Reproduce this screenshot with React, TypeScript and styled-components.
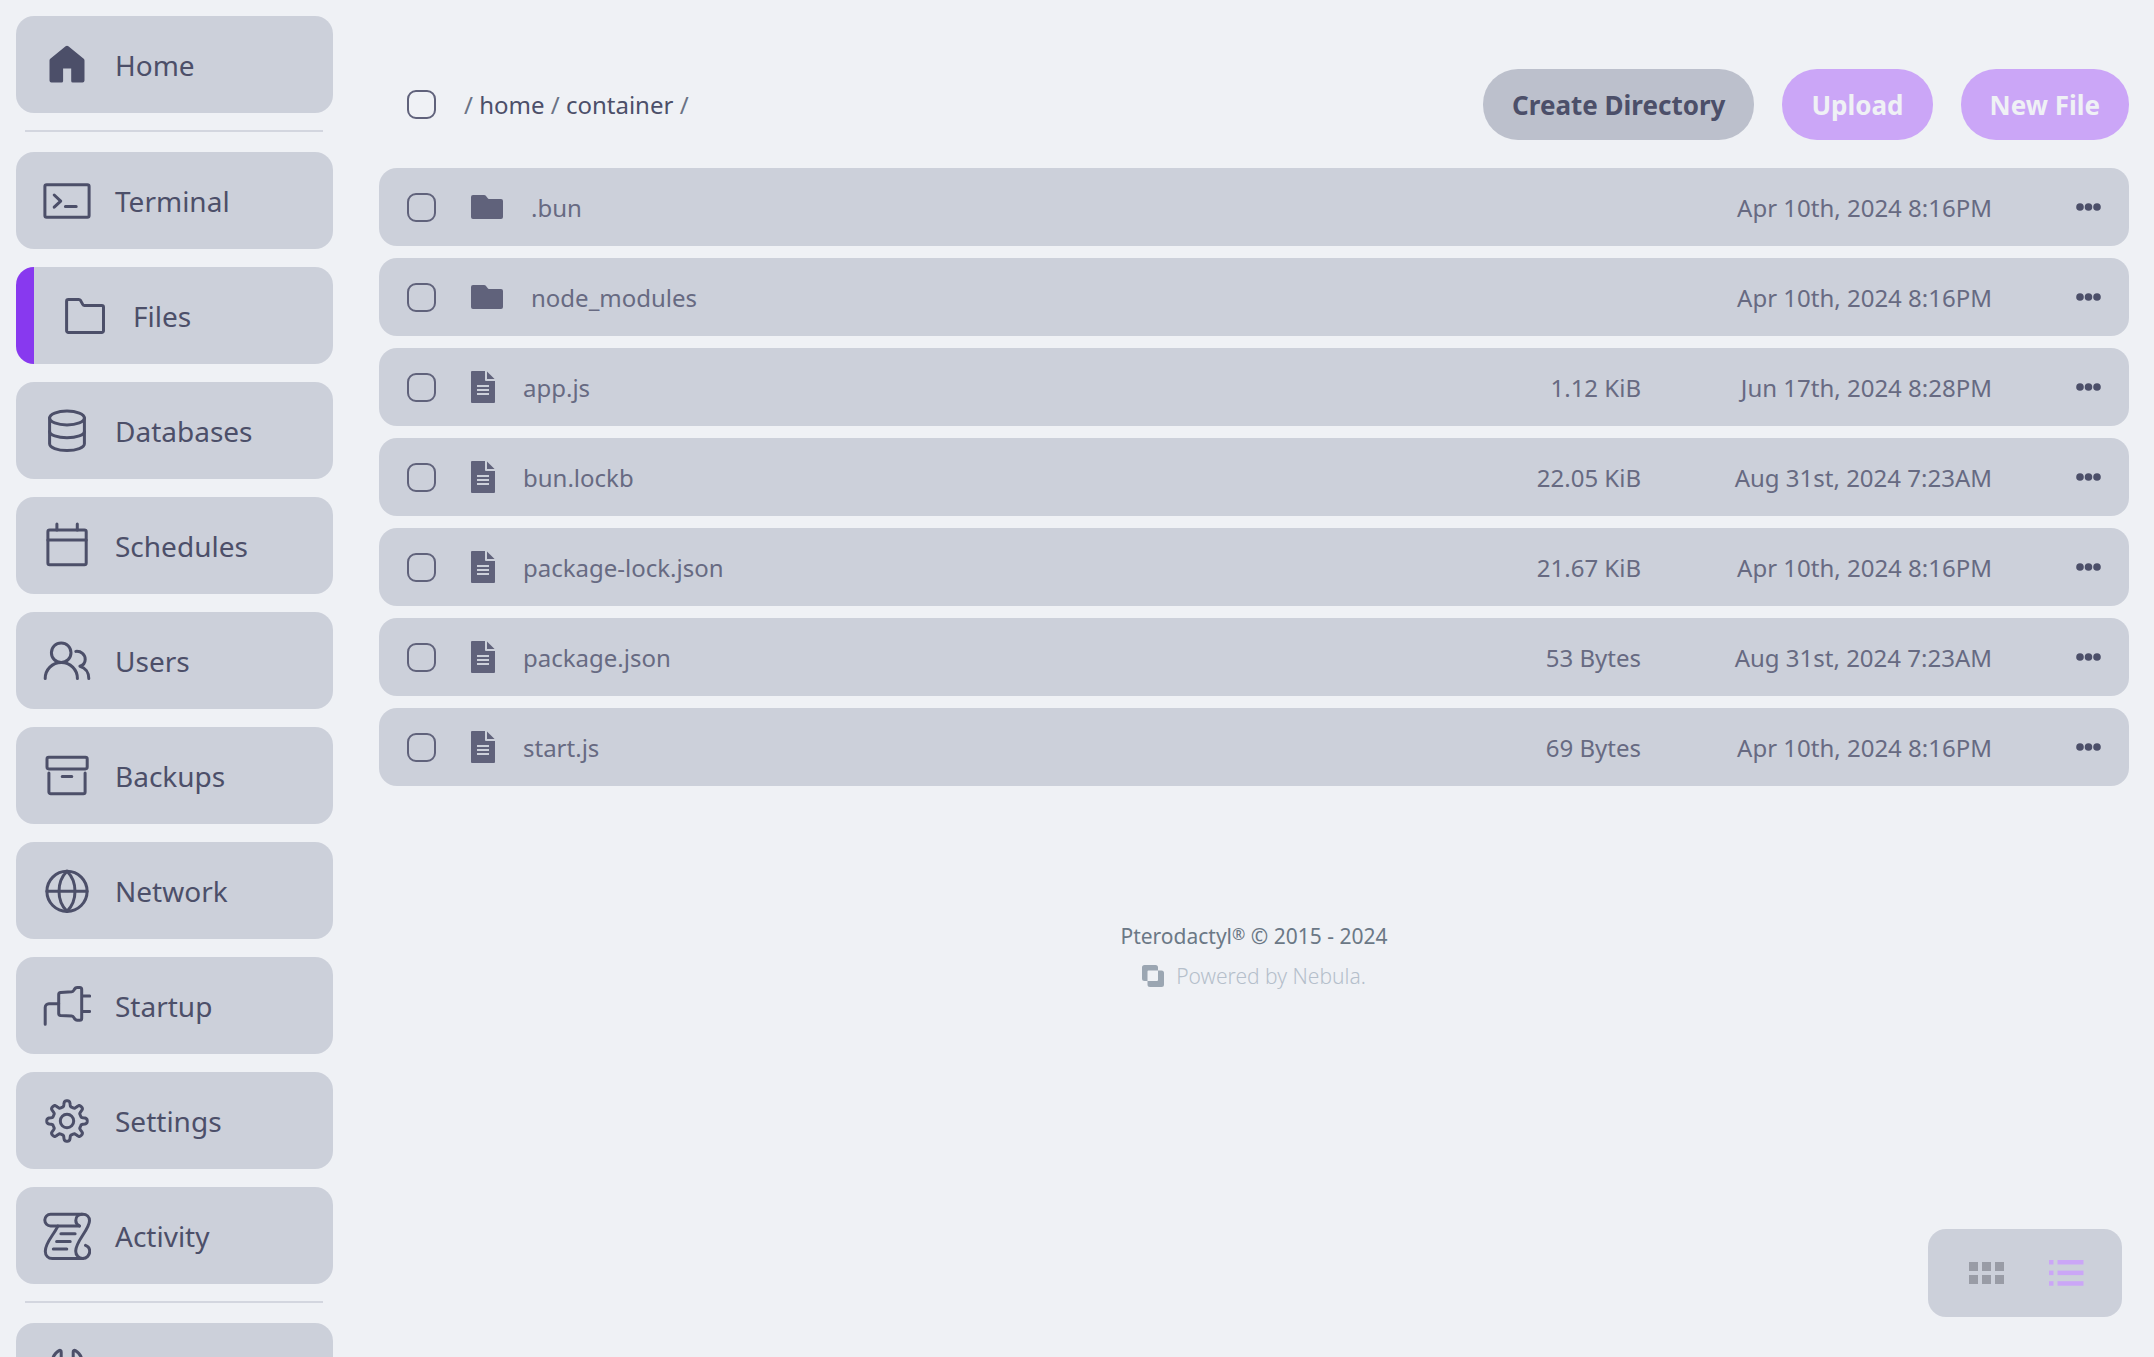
import React from 'react';
import styled, { createGlobalStyle, css } from 'styled-components';

const color = {
  base: '#eff1f5',
  surface: '#ccd0da',
  surfaceStrong: '#bcc0cc',
  text: '#4c4f69',
  subtext: '#676a82',
  icon: '#60627b',
  mauve: '#cba6f7',
  accent: '#8839ef',
  footer: '#6b7886',
  footerFaint: '#b5bfcb',
  footerLogo: '#9ba6b2',
  muted: '#999ca6',
};

const GlobalStyle = createGlobalStyle`
  *, *::before, *::after { box-sizing: border-box; }
  body {
    margin: 0;
    background: ${color.base};
    color: ${color.text};
    font-family: 'Noto Sans', 'Open Sans', sans-serif;
    font-size: 24px;
  }
  button { font: inherit; border: 0; cursor: pointer; }
  svg { display: block; }
`;

const Shell = styled.div`
  display: flex;
  height: 100vh;
  overflow: hidden;
`;

const Sidebar = styled.nav`
  flex: 0 0 333px;
  padding: 16px 0 0 16px;
  overflow: hidden;
`;

const NavGroup = styled.ul`
  display: grid;
  gap: 18px;
  margin: 0;
  padding: 0;
  list-style: none;
`;

const NavDivider = styled.hr`
  height: 2px;
  margin: 17px 10px 20px 9px;
  border: 0;
  background: #d3d6df;
`;

const NavLink = styled.a<{ $active?: boolean }>`
  display: flex;
  align-items: center;
  gap: 24px;
  height: 97px;
  padding-left: 27px;
  border-radius: 18px;
  background: ${color.surface};
  color: ${color.text};
  font-size: 28px;
  text-decoration: none;
  ${({ $active }) =>
    $active &&
    css`
      border-left: 18px solid ${color.accent};
    `}
`;

const NavIcon = styled.svg`
  flex: none;
  width: 48px;
  height: 48px;
  fill: none;
  stroke: currentColor;
  stroke-width: 3;
  stroke-linecap: round;
  stroke-linejoin: round;
`;

const Main = styled.main`
  flex: 1;
  min-width: 0;
  padding: 69px 25px 40px 46px;
`;

const Toolbar = styled.header`
  display: flex;
  align-items: center;
  gap: 28px;
  height: 71px;
  margin-bottom: 16px;
  padding-left: 28px;
`;

const Checkbox = styled.input.attrs({ type: 'checkbox' })`
  appearance: none;
  display: block;
  flex: none;
  width: 29px;
  height: 29px;
  margin: 0;
  border: 2px solid ${color.icon};
  border-radius: 9px;
  &:checked { background: ${color.mauve}; }
`;

const Breadcrumbs = styled.nav`
  flex: 1;
  color: #6b7385;
  a { color: ${color.text}; text-decoration: none; }
`;

const Actions = styled.div`
  display: flex;
  gap: 28px;
`;

const ActionButton = styled.button<{ $primary?: boolean }>`
  height: 71px;
  padding: 0 29px;
  border-radius: 35px;
  background: ${({ $primary }) => ($primary ? color.mauve : color.surfaceStrong)};
  color: ${({ $primary }) => ($primary ? color.base : color.text)};
  font-size: 26px;
  font-weight: 700;
  white-space: nowrap;
`;

const FileTable = styled.table`
  width: 100%;
  table-layout: fixed;
  border-collapse: separate;
  border-spacing: 0 12px;
  color: ${color.subtext};
`;

const Column = styled.col<{ $width?: number }>`
  width: ${({ $width }) => ($width ? `${$width}px` : 'auto')};
`;

const Cell = styled.td<{ $align?: 'right' }>`
  height: 78px;
  padding: 0;
  background: ${color.surface};
  text-align: ${({ $align }) => $align ?? 'left'};
  white-space: nowrap;
  &:first-child { padding-left: 28px; border-radius: 18px 0 0 18px; }
  &:last-child { padding-right: 28px; border-radius: 0 18px 18px 0; }
`;

const FileName = styled.a`
  display: flex;
  align-items: center;
  gap: 28px;
  color: inherit;
  text-decoration: none;
  svg { flex: none; fill: ${color.icon}; }
`;

const MenuButton = styled.button`
  display: block;
  margin-left: auto;
  padding: 8px 0;
  background: none;
  color: ${color.text};
`;

const Footer = styled.footer`
  display: grid;
  justify-items: center;
  gap: 8px;
  margin-top: 122px;
  font-size: 21px;
  line-height: 32px;
`;

const Copyright = styled.p`
  margin: 0;
  color: ${color.footer};
`;

const Registered = styled.span`
  font-size: 16px;
  line-height: 1;
  vertical-align: 4px;
`;

const PoweredBy = styled.a`
  display: flex;
  align-items: center;
  gap: 12px;
  color: ${color.footerFaint};
  font-weight: 300;
  text-decoration: none;
`;

const ViewSwitch = styled.div`
  position: fixed;
  right: 32px;
  bottom: 40px;
  display: flex;
  padding: 0 16px 0 18px;
  border-radius: 18px;
  background: ${color.surface};
`;

const ViewButton = styled.button<{ $active?: boolean }>`
  display: grid;
  place-items: center;
  width: 80px;
  height: 88px;
  padding: 0;
  background: none;
  color: ${({ $active }) => ($active ? color.mauve : color.muted)};
`;

/* Eight rounded teeth traced as a closed outline around (24, 24). */
const gearOutline = (() => {
  const points: string[] = [];
  for (let i = 0; i < 192; i += 1) {
    const a = (i / 192) * Math.PI * 2;
    const r = 17.4 + 2.9 * Math.tanh(2.4 * (Math.cos(8 * a) - 0.15));
    points.push(`${(24 + r * Math.sin(a)).toFixed(2)} ${(24 - r * Math.cos(a)).toFixed(2)}`);
  }
  return `M${points.join('L')}Z`;
})();

const icons = {
  home: (
    <path
      fill="currentColor"
      stroke="none"
      d="M22.6 5.3a2.2 2.2 0 0 1 2.8 0L40.7 17.8a2.2 2.2 0 0 1 .8 1.700v20a2 2 0 0 1-2 2H29.8a1.6 1.6 0 0 1-1.6-1.6V27.5h-8.1v12.4a1.6 1.6 0 0 1-1.6 1.6H8.5a2 2 0 0 1-2-2v-20a2.2 2.2 0 0 1 .8-1.700Z"
    />
  ),
  terminal: (
    <>
      <rect x="1.9" y="7.8" width="44.2" height="32.4" rx="1.8" />
      <path d="M11.2 18l6.5 6.1-6.5 6.1M22.4 29.4h10.8" />
    </>
  ),
  folder: (
    <path d="M5.6 9.3a1.8 1.8 0 0 1 1.8-1.8h10.4c.8 0 1.3.3 1.7.9l2.2 4c.4.7 1 1.1 1.8 1.1h17.2a1.8 1.8 0 0 1 1.8 1.8v23.4a1.8 1.8 0 0 1-1.8 1.8H7.4a1.8 1.8 0 0 1-1.8-1.8Z" />
  ),
  database: (
    <>
      <ellipse cx="24" cy="11" rx="17.4" ry="7" />
      <path d="M6.6 11v25.8c0 3.8 7.8 6.8 17.4 6.8s17.4-3 17.4-6.8V11" />
      <path d="M6.6 24.4c0 3.6 7.8 6.3 17.4 6.3s17.4-2.7 17.4-6.3" />
    </>
  ),
  calendar: (
    <>
      <rect x="4.9" y="8" width="38.3" height="34.7" rx="1.8" />
      <path d="M4.9 18h38.3M13.9 2v6M34.3 2v6" />
    </>
  ),
  users: (
    <>
      <circle cx="18.2" cy="15.7" r="9.8" />
      <path d="M2.2 41.5c0-8.9 7.1-16 16.1-16s16.1 7.1 16.1 16" />
      <path d="M32.8 14.4c5.3-.5 9.4 3.1 9.4 8 0 3.2-1.8 5.6-5.3 6.8 5.4 1.5 8.9 6.4 8.9 12.3" />
    </>
  ),
  archive: (
    <>
      <rect x="4" y="5.3" width="40.2" height="11.6" rx="1.8" />
      <path d="M5.9 21v19a1.8 1.8 0 0 0 1.8 1.8h32.6a1.8 1.8 0 0 0 1.8-1.8V21M19.2 24.5h9.6" />
    </>
  ),
  globe: (
    <>
      <circle cx="24" cy="24.3" r="20.1" />
      <path d="M3.9 24.3h40.2M24 4.2c-5.3 5.2-8 12-8 20.1s2.7 14.9 8 20.1c5.3-5.2 8-12 8-20.1s-2.7-14.9-8-20.1Z" />
    </>
  ),
  plug: (
    <>
      <path d="M2.2 42.2V25.4a3.7 3.7 0 0 1 3.7-3.7h9.8" />
      <path d="M15.7 12.4c0-1.3.7-1.9 2-2l11-.6c1.2-.1 1.7-.6 2.2-1.6.8-1.7 1.8-2.6 3.4-2.6h2.4c1.3 0 2 .7 2 2v28.6c0 1.3-.7 2-2 2h-2.4c-1.6 0-2.6-.9-3.4-2.6-.5-1-1-1.5-2.2-1.6l-11-.6c-1.3-.1-2-.8-2-2ZM38.7 14.1h8M38.7 29.4h8" />
    </>
  ),
  gear: (
    <>
      <path d={gearOutline} />
      <circle cx="24" cy="24" r="6.7" />
    </>
  ),
  scroll: (
    <>
      <path d="M36.4 13.9H7.6a5.8 5.8 0 0 1 0-11.6h32.2c4 0 6.7 2.8 6.7 6.4 0 8.6-13.8 20.6-13.8 30.2 0 4.4 3 7.6 7 7.6s7-3.2 7-7.2c0-2.7-1.5-4.9-4.2-5.9" />
      <path d="M38.8 2.3c-3.6.2-6 2.6-6 6.2 0 2.2 1.2 4.3 3.6 5.4M14.9 14.1C10.5 23.2 2.3 30.6 2.3 39.2c0 4.3 2.9 7.3 7 7.3h30.4M17.9 21.7h14.2M13.6 29.4h13.6M10.3 37.1h13.5" />
    </>
  ),
  wrench: (
    <path d="M9.6 11c1.1-3.8 3.3-6.7 6.4-8.4 1.2-.6 2.2 0 2.2 1.4v13l6 4 6-4V4c0-1.4 1-2 2.2-1.4 3.1 1.7 5.3 4.6 6.4 8.4 1.6 7-1.8 12.5-6.600 15.500V46H15.8V26.5C11 23.5 8 18 9.6 11Z" />
  ),
};

type IconName = keyof typeof icons;

const primaryLinks: { label: string; icon: IconName; active?: boolean }[] = [
  { label: 'Terminal', icon: 'terminal' },
  { label: 'Files', icon: 'folder', active: true },
  { label: 'Databases', icon: 'database' },
  { label: 'Schedules', icon: 'calendar' },
  { label: 'Users', icon: 'users' },
  { label: 'Backups', icon: 'archive' },
  { label: 'Network', icon: 'globe' },
  { label: 'Startup', icon: 'plug' },
  { label: 'Settings', icon: 'gear' },
  { label: 'Activity', icon: 'scroll' },
];

const files: { name: string; kind: 'folder' | 'file'; size?: string; modified: string }[] = [
  { name: '.bun', kind: 'folder', modified: 'Apr 10th, 2024 8:16PM' },
  { name: 'node_modules', kind: 'folder', modified: 'Apr 10th, 2024 8:16PM' },
  { name: 'app.js', kind: 'file', size: '1.12 KiB', modified: 'Jun 17th, 2024 8:28PM' },
  { name: 'bun.lockb', kind: 'file', size: '22.05 KiB', modified: 'Aug 31st, 2024 7:23AM' },
  { name: 'package-lock.json', kind: 'file', size: '21.67 KiB', modified: 'Apr 10th, 2024 8:16PM' },
  { name: 'package.json', kind: 'file', size: '53 Bytes', modified: 'Aug 31st, 2024 7:23AM' },
  { name: 'start.js', kind: 'file', size: '69 Bytes', modified: 'Apr 10th, 2024 8:16PM' },
];

function NavItem({ label, icon, active }: { label?: string; icon: IconName; active?: boolean }) {
  return (
    <li>
      <NavLink href="#" $active={active} aria-current={active ? 'page' : undefined}>
        <NavIcon viewBox="0 0 48 48" aria-hidden="true">
          {icons[icon]}
        </NavIcon>
        {label}
      </NavLink>
    </li>
  );
}

function FileIcon({ kind }: { kind: 'folder' | 'file' }) {
  if (kind === 'folder') {
    return (
      <svg width="32" height="24" viewBox="0 0 32 24" aria-hidden="true">
        <path d="M2 0h11.2a2 2 0 0 1 1.4.6L17 3.4a2 2 0 0 0 1.4.6H30a2 2 0 0 1 2 2v16a2 2 0 0 1-2 2H2a2 2 0 0 1-2-2V2a2 2 0 0 1 2-2Z" />
      </svg>
    );
  }
  return (
    <svg width="24" height="32" viewBox="0 0 24 32" aria-hidden="true">
      <path
        fillRule="evenodd"
        d="M1 0h13v9a1 1 0 0 0 1 1h9v21a1 1 0 0 1-1 1H1a1 1 0 0 1-1-1V1a1 1 0 0 1 1-1ZM6 14v2h12v-2ZM6 18v2h12v-2ZM6 22v2h12v-2Z"
      />
      <path d="M16 .4L23.6 8H16Z" />
    </svg>
  );
}

export default function App() {
  return (
    <>
      <GlobalStyle />
      <Shell>
        <Sidebar>
          <NavGroup>
            <NavItem label="Home" icon="home" />
          </NavGroup>
          <NavDivider />
          <NavGroup>
            {primaryLinks.map((link) => (
              <NavItem key={link.label} {...link} />
            ))}
          </NavGroup>
          <NavDivider />
          <NavGroup>
            <NavItem icon="wrench" />
          </NavGroup>
        </Sidebar>

        <Main>
          <Toolbar>
            <Checkbox aria-label="Select all files" />
            <Breadcrumbs>
              / <a href="#home">home</a> / <a href="#container">container</a> /
            </Breadcrumbs>
            <Actions>
              <ActionButton type="button">Create Directory</ActionButton>
              <ActionButton type="button" $primary>
                Upload
              </ActionButton>
              <ActionButton type="button" $primary>
                New File
              </ActionButton>
            </Actions>
          </Toolbar>

          <FileTable>
            <colgroup>
              <Column $width={92} />
              <Column />
              <Column $width={220} />
              <Column $width={351} />
              <Column $width={137} />
            </colgroup>
            <tbody>
              {files.map((file) => (
                <tr key={file.name}>
                  <Cell>
                    <Checkbox aria-label={`Select ${file.name}`} />
                  </Cell>
                  <Cell>
                    <FileName href="#">
                      <FileIcon kind={file.kind} />
                      {file.name}
                    </FileName>
                  </Cell>
                  <Cell $align="right">{file.size}</Cell>
                  <Cell $align="right">{file.modified}</Cell>
                  <Cell $align="right">
                    <MenuButton type="button" aria-label={`Actions for ${file.name}`}>
                      <svg width="25" height="8" viewBox="0 0 25 8" fill="currentColor">
                        <circle cx="4" cy="4" r="3.8" />
                        <circle cx="12.5" cy="4" r="3.8" />
                        <circle cx="21" cy="4" r="3.8" />
                      </svg>
                    </MenuButton>
                  </Cell>
                </tr>
              ))}
            </tbody>
          </FileTable>

          <Footer>
            <Copyright>
              Pterodactyl<Registered>®</Registered> © 2015 - 2024
            </Copyright>
            <PoweredBy href="#">
              <svg width="22" height="22" viewBox="0 0 22 22" aria-hidden="true">
                <path
                  fill={color.footerLogo}
                  fillRule="evenodd"
                  d="M2.5 0h11A2.500 2.500 0 0 1 16 2.500V5.500h3.500A2.500 2.500 0 0 1 22 8v11.500a2.500 2.500 0 0 1-2.500 2.500H8a2.500 2.500 0 0 1-2.500-2.500V16h-3A2.500 2.500 0 0 1 0 13.500v-11A2.500 2.500 0 0 1 2.500 0ZM6.500 5.500a1 1 0 0 0-1 1V16h9.500a1 1 0 0 0 1-1V5.500Z"
                />
              </svg>
              Powered by Nebula.
            </PoweredBy>
          </Footer>
        </Main>

        <ViewSwitch>
          <ViewButton type="button" aria-label="Grid view">
            <svg width="35" height="22" viewBox="0 0 35 22" fill="currentColor">
              {[0, 13, 26].map((x) =>
                [0, 13].map((y) => <rect key={`${x}-${y}`} x={x} y={y} width="9" height="9" />),
              )}
            </svg>
          </ViewButton>
          <ViewButton type="button" aria-label="List view" aria-pressed="true" $active>
            <svg width="35" height="26" viewBox="0 0 35 26" fill="currentColor">
              {[0, 10.6, 21.2].map((y) => (
                <React.Fragment key={y}>
                  <rect x="0" y={y} width="4.5" height="4.5" />
                  <rect x="8.5" y={y} width="26" height="4.5" />
                </React.Fragment>
              ))}
            </svg>
          </ViewButton>
        </ViewSwitch>
      </Shell>
    </>
  );
}
